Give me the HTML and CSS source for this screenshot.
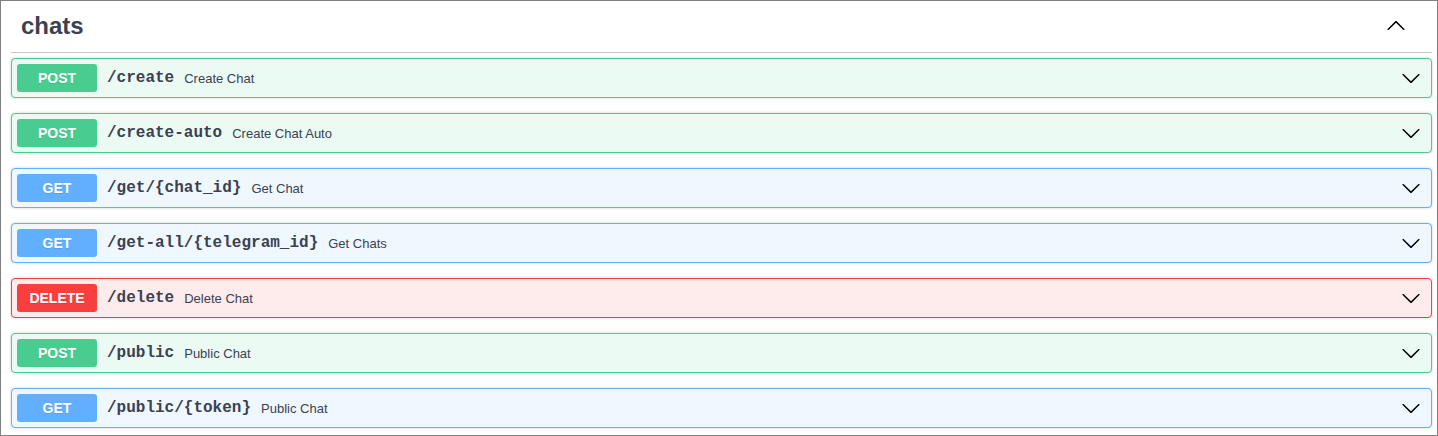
FILE: index.html
```html
<!DOCTYPE html>
<html>
<head>
<meta charset="utf-8">
<link rel="stylesheet" href="styles.css">
</head>
<body>
<div class="frame">
  <div class="tag">
    <h3 class="tag-title">
      <span class="tag-name">chats</span>
      <svg class="arrow arrow-up" width="20" height="20" viewBox="0 0 20 20"><path d="M 17.418 14.908 C 17.69 15.176 18.127 15.176 18.397 14.908 C 18.667 14.64 18.665 14.207 18.397 13.939 L 10.489 6.109 C 10.219 5.841 9.782 5.841 9.51 6.109 L 1.602 13.939 C 1.332 14.207 1.332 14.64 1.602 14.908 C 1.873 15.176 2.311 15.176 2.581 14.908 L 10 7.767 L 17.418 14.908 Z"/></svg>
    </h3>
    <div class="ops">
      <div class="op post"><span class="method">POST</span><span class="path">/create</span><span class="desc">Create Chat</span><svg class="arrow" width="20" height="20" viewBox="0 0 20 20"><path d="M17.418 6.109c.272-.268.709-.268.979 0s.268.701 0 .969l-7.908 7.830c-.27.268-.707.268-.979 0l-7.908-7.830c-.27-.268-.27-.701 0-.969.271-.268.709-.268.979 0L10 13.25l7.418-7.141z"/></svg></div>
      <div class="op post"><span class="method">POST</span><span class="path">/create-auto</span><span class="desc">Create Chat Auto</span><svg class="arrow" width="20" height="20" viewBox="0 0 20 20"><path d="M17.418 6.109c.272-.268.709-.268.979 0s.268.701 0 .969l-7.908 7.830c-.27.268-.707.268-.979 0l-7.908-7.830c-.27-.268-.27-.701 0-.969.271-.268.709-.268.979 0L10 13.25l7.418-7.141z"/></svg></div>
      <div class="op get"><span class="method">GET</span><span class="path">/get/{chat_id}</span><span class="desc">Get Chat</span><svg class="arrow" width="20" height="20" viewBox="0 0 20 20"><path d="M17.418 6.109c.272-.268.709-.268.979 0s.268.701 0 .969l-7.908 7.830c-.27.268-.707.268-.979 0l-7.908-7.830c-.27-.268-.27-.701 0-.969.271-.268.709-.268.979 0L10 13.25l7.418-7.141z"/></svg></div>
      <div class="op get"><span class="method">GET</span><span class="path">/get-all/{telegram_id}</span><span class="desc">Get Chats</span><svg class="arrow" width="20" height="20" viewBox="0 0 20 20"><path d="M17.418 6.109c.272-.268.709-.268.979 0s.268.701 0 .969l-7.908 7.830c-.27.268-.707.268-.979 0l-7.908-7.830c-.27-.268-.27-.701 0-.969.271-.268.709-.268.979 0L10 13.25l7.418-7.141z"/></svg></div>
      <div class="op delete"><span class="method">DELETE</span><span class="path">/delete</span><span class="desc">Delete Chat</span><svg class="arrow" width="20" height="20" viewBox="0 0 20 20"><path d="M17.418 6.109c.272-.268.709-.268.979 0s.268.701 0 .969l-7.908 7.830c-.27.268-.707.268-.979 0l-7.908-7.830c-.27-.268-.27-.701 0-.969.271-.268.709-.268.979 0L10 13.25l7.418-7.141z"/></svg></div>
      <div class="op post"><span class="method">POST</span><span class="path">/public</span><span class="desc">Public Chat</span><svg class="arrow" width="20" height="20" viewBox="0 0 20 20"><path d="M17.418 6.109c.272-.268.709-.268.979 0s.268.701 0 .969l-7.908 7.830c-.27.268-.707.268-.979 0l-7.908-7.830c-.27-.268-.27-.701 0-.969.271-.268.709-.268.979 0L10 13.25l7.418-7.141z"/></svg></div>
      <div class="op get"><span class="method">GET</span><span class="path">/public/{token}</span><span class="desc">Public Chat</span><svg class="arrow" width="20" height="20" viewBox="0 0 20 20"><path d="M17.418 6.109c.272-.268.709-.268.979 0s.268.701 0 .969l-7.908 7.830c-.27.268-.707.268-.979 0l-7.908-7.830c-.27-.268-.27-.701 0-.969.271-.268.709-.268.979 0L10 13.25l7.418-7.141z"/></svg></div>
    </div>
  </div>
</div>
</body>
</html>
```

FILE: styles.css
```css
* { box-sizing: border-box; }
html, body { margin: 0; padding: 0; background: #fff; }
.frame {
  width: 1438px;
  height: 436px;
  border: 1px solid #808080;
  padding: 0 5px 0 10px;
  overflow: hidden;
  font-family: "Liberation Sans", Arial, sans-serif;
  color: #3b4151;
}
.tag-title {
  margin: 0 0 5px;
  height: 52px;
  display: flex;
  align-items: center;
  padding: 0 26px 0 10px;
  border-bottom: 1px solid rgba(59, 65, 81, 0.3);
  font-size: 24px;
  font-weight: 700;
  color: #3b4151;
}
.tag-name { flex: 1; padding-bottom: 2px; }
.arrow { fill: #000; flex: none; }
.arrow-up { margin-bottom: 3px; }
.op {
  display: flex;
  align-items: center;
  height: 40px;
  margin-bottom: 15px;
  padding: 0 10px 0 5px;
  border: 1px solid;
  border-radius: 4px;
  box-shadow: 0 0 3px rgba(0, 0, 0, 0.19);
}
.method {
  width: 80px;
  height: 28px;
  line-height: 28px;
  border-radius: 3px;
  text-align: center;
  color: #fff;
  font-size: 14px;
  font-weight: 700;
  text-shadow: 0 1px 0 rgba(0,0,0,.1);
  flex: none;
}
.path {
  padding: 0 10px;
  font-family: "Liberation Mono", "Courier New", monospace;
  font-size: 16px;
  font-weight: 700;
  color: #3b4151;
}
.desc {
  flex: 1;
  font-size: 13px;
  color: #3b4151;
}
.post { background: #ecfaf4; border-color: #49cc90; }
.post .method { background: #49cc90; }
.get { background: #eff7ff; border-color: #61affe; }
.get .method { background: #61affe; }
.delete { background: #feebeb; border-color: #f93e3e; }
.delete .method { background: #f93e3e; }
```
